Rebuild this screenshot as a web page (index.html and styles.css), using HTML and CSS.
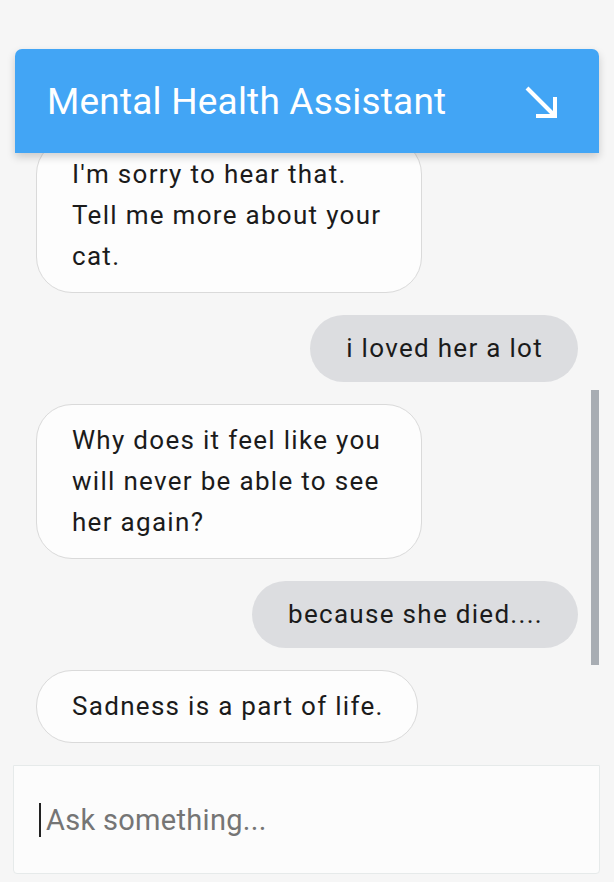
FILE: index.html
```html
<!DOCTYPE html>
<html lang="en">
<head>
<meta charset="utf-8">
<title>Mental Health Assistant</title>
<link rel="stylesheet" href="styles.css">
</head>
<body>
<div class="app">
  <header class="header">
    <h1 class="title">Mental Health Assistant</h1>
    <svg class="minimize" width="36" height="36" viewBox="0 0 36 36" aria-hidden="true">
      <path d="M4 4 L32 32" stroke="#fff" stroke-width="4" fill="none"/>
      <path d="M32 13 V32 H13" stroke="#fff" stroke-width="4" fill="none"/>
    </svg>
  </header>
  <main class="messages">
    <div class="msg bot">I'm sorry to hear that. Tell me more about your cat.</div>
    <div class="msg user">i loved her a lot</div>
    <div class="msg bot">Why does it feel like you will never be able to see her again?</div>
    <div class="msg user">because she died....</div>
    <div class="msg bot">Sadness is a part of life.</div>
    <div class="scroll-thumb"></div>
  </main>
  <div class="composer">
    <span class="caret"></span><span class="placeholder">Ask something...</span>
  </div>
</div>
</body>
</html>
```

FILE: styles.css
```css
* { box-sizing: border-box; }
html, body { margin: 0; padding: 0; }
body {
  background: #f6f6f6;
  font-family: Roboto, "Noto Sans", sans-serif;
  width: 614px;
  height: 882px;
  overflow: hidden;
}
.app {
  padding: 49px 15px 0 15px;
  display: flex;
  flex-direction: column;
}
.header {
  position: relative;
  z-index: 2;
  height: 104px;
  background: #42a5f5;
  border-radius: 7px 7px 0 0;
  box-shadow: 0 4px 8px rgba(0, 0, 0, 0.18);
  display: flex;
  align-items: center;
  justify-content: space-between;
  padding: 0 40px 0 32px;
}
.title {
  margin: 0;
  color: #fff;
  font-weight: 400;
  font-size: 37px;
  letter-spacing: 0.2px;
}
.minimize { display: block; margin-top: 2px; }
.messages {
  position: relative;
  height: 612px;
  overflow: hidden;
  display: flex;
  flex-direction: column;
  justify-content: flex-end;
  gap: 22px;
  padding: 0 21px 22px 21px;
}
.msg {
  flex: none;
  font-size: 26px;
  letter-spacing: 1.3px;
  line-height: 41px;
  color: #1b1b1b;
}
.bot {
  align-self: flex-start;
  max-width: 386px;
  background: #fdfdfd;
  border: 1px solid #dadada;
  border-radius: 36px;
  padding: 15px 33px 15px 35px;
}
.user {
  align-self: flex-end;
  background: #dcdde0;
  border-radius: 34px;
  padding: 13px 35px 13px 36px;
}
.scroll-thumb {
  position: absolute;
  right: 0;
  top: 237px;
  width: 8px;
  height: 275px;
  background: #a8adb3;
}
.composer {
  margin: 0 -1px 0 -2px;
  height: 109px;
  background: #fcfcfc;
  border: 1px solid #e6eaea;
  border-radius: 0 0 4px 4px;
  display: flex;
  align-items: center;
  padding: 0 0 0 25px;
}
.caret {
  width: 2px;
  height: 34px;
  background: #222;
  margin-right: 5px;
}
.placeholder {
  font-size: 29px;
  letter-spacing: 0.3px;
  color: #757575;
}
```
